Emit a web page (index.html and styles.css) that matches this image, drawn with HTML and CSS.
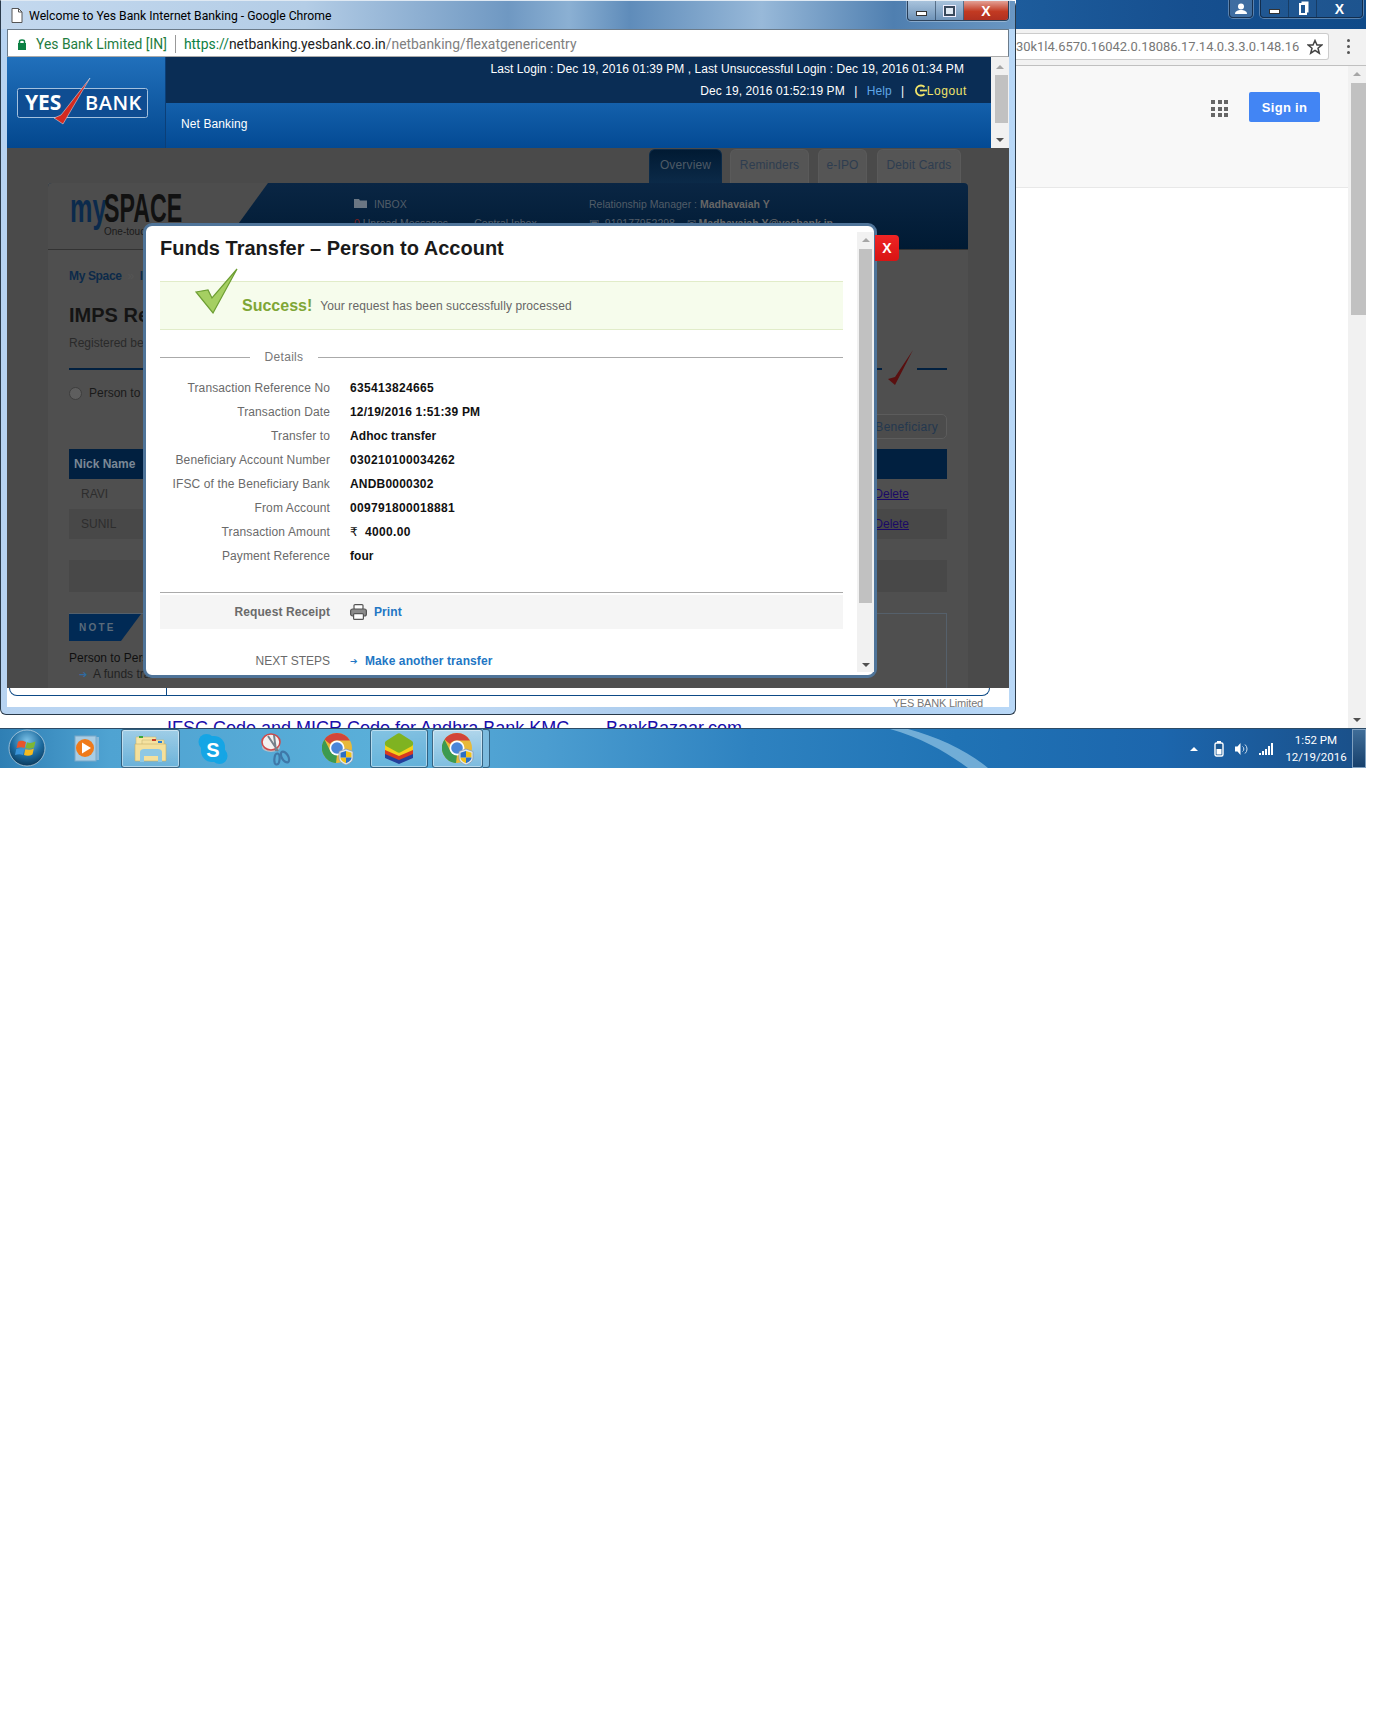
FILE: index.html
```html
<!DOCTYPE html>
<html lang="en">
<head>
<meta charset="utf-8">
<title>Funds Transfer</title>
<link rel="stylesheet" href="styles.css">
</head>
<body>
<svg class="defs" width="0" height="0" aria-hidden="true">
  <defs>
    <symbol id="chrome" viewBox="0 0 32 32">
      <circle cx="15" cy="15" r="15" fill="#e8b93a"/>
      <path d="M15 0A15 15 0 0 1 28 7.500L15 7.500A7.500 7.500 0 0 0 8 11L2.500 6.500A15 15 0 0 1 15 0Z" fill="#d2453a"/>
      <path d="M2.500 6.500L8.500 18.500L14 29.900A15 15 0 0 1 2.500 6.500Z" fill="#3c9a50"/>
      <path d="M8 17L15 22L14 30A15 15 0 0 1 9 28Z" fill="#3c9a50"/>
      <circle cx="15" cy="15" r="7.500" fill="#fff"/>
      <circle cx="15" cy="15" r="5.800" fill="#4a86d8"/>
      <path d="M24 16L31 18.500V25C31 28.500 27.500 30.500 24 32C20.500 30.500 17 28.500 17 25V18.500Z" fill="#dfe8ee" stroke="#8c9cae" stroke-width=".8"/>
      <path d="M24 18L29.500 19.700V24.500H24ZM24 24.500V30.300C21.500 29 18.500 27.500 18.500 24.500Z" fill="#f2c21a"/>
      <path d="M24 18V24.500H18.500V19.700ZM24 24.500H29.500C29.500 27.500 26.500 29 24 30.300Z" fill="#2b6fc4"/>
    </symbol>
    <symbol id="tick" viewBox="0 0 44 46">
      <path d="M1 24L13 22L17 30L42 1L18 45Z" fill="#a5cf62" stroke="#6d9e33" stroke-width="1.200"/>
    </symbol>
  </defs>
</svg>

<main class="desktop">

  <section class="back-window">
    <div class="back-titlebar">
      <div class="caption-group profile-button">
        <svg width="14" height="12" viewBox="0 0 14 12"><circle cx="7" cy="3.500" r="3" fill="#fff"/><path d="M1 11C1 8 4 7 7 7S13 8 13 11Z" fill="#fff"/></svg>
      </div>
      <div class="caption-group back-caption">
        <span class="cap-cell"><i class="glyph-min"></i></span>
        <span class="cap-cell"><i class="glyph-restore"></i></span>
        <span class="cap-cell cap-wide">X</span>
      </div>
    </div>
    <div class="back-toolbar">
      <div class="omnibox">
        <span class="omni-text">30k1l4.6570.16042.0.18086.17.14.0.3.3.0.148.16</span>
        <svg class="omni-star" width="16" height="16" viewBox="0 0 16 16"><path d="M8 1.500L10 6H14.800L11 9.200L12.300 14.200L8 11.400L3.700 14.200L5 9.200L1.200 6H6Z" fill="none" stroke="#444" stroke-width="1.500"/></svg>
      </div>
      <span class="omni-menu"><i></i><i></i><i></i></span>
    </div>
    <div class="back-page">
      <div class="back-content">
        <header class="google-bar">
          <div class="apps-grid"><i></i><i></i><i></i><i></i><i></i><i></i><i></i><i></i><i></i></div>
          <button class="sign-in">Sign in</button>
        </header>
      </div>
      <div class="back-scroll">
        <span class="arrow-up gray"></span>
        <span class="back-thumb"></span>
        <span class="arrow-down gray back-arrow-down"></span>
      </div>
    </div>
  </section>

  <a class="behind-link">IFSC Code and MICR Code for Andhra Bank KMC ...</a>
  <a class="behind-link behind-link-2">BankBazaar.com</a>

  <section class="window">
    <div class="titlebar">
      <svg class="doc-icon" width="12" height="15" viewBox="0 0 12 15"><path d="M1 .500H7.500L11 4V14.500H1Z" fill="#fff" stroke="#555"/><path d="M7.500 .500V4H11" fill="none" stroke="#555"/></svg>
      <span class="window-title">Welcome to Yes Bank Internet Banking - Google Chrome</span>
      <div class="caption-group front-caption">
        <span class="cap-cell"><i class="glyph-min"></i></span>
        <span class="cap-cell"><i class="glyph-max"></i></span>
        <span class="cap-cell cap-close">X</span>
      </div>
    </div>

    <div class="addressbar">
      <svg class="lock" width="10" height="12" viewBox="0 0 10 12"><path d="M2.500 5V3.500C2.500 1.500 7.500 1.500 7.500 3.500V5" fill="none" stroke="#0b8043" stroke-width="1.500"/><rect x="1" y="5" width="8" height="7" fill="#0b8043"/></svg>
      <span class="ev-name">Yes Bank Limited [IN]</span>
      <span class="addr-sep"></span>
      <span class="url"><span class="url-scheme">https://</span><span class="url-host">netbanking.yesbank.co.in</span><span class="url-path">/netbanking/flexatgenericentry</span></span>
    </div>

    <header class="bank-header">
      <div class="logo-cell">
        <svg class="bank-logo" width="140" height="52" viewBox="0 0 140 52">
          <rect x="1.500" y="10.500" width="130" height="29" rx="2" fill="#0f4d92" stroke="#a4c1de"/>
          <text x="9" y="32" class="logo-yes">YES</text>
          <text x="69" y="32" class="logo-bank">BANK</text>
          <path d="M38 40L47 46L74 0L45 37Z" fill="#d42a20" stroke="#e8eef5" stroke-width=".5"/>
        </svg>
      </div>
      <div class="header-main">
        <div class="header-top">
          <p class="login-line">Last Login : Dec 19, 2016 01:39 PM , Last Unsuccessful Login : Dec 19, 2016 01:34 PM</p>
          <p class="session-line">Dec 19, 2016 01:52:19 PM <span class="pipe">|</span> <a class="help-link">Help</a> <span class="pipe">|</span>
            <a class="logout-link"><svg width="13" height="13" viewBox="0 0 13 13"><path d="M10.500 3A5 5 0 1 0 10.500 10" fill="none" stroke="#f1e36a" stroke-width="1.800"/><path d="M6 6.500H13" stroke="#f1e36a" stroke-width="1.800"/></svg>Logout</a></p>
        </div>
        <div class="header-nav">Net Banking</div>
      </div>
      <div class="header-scroll">
        <span class="arrow-up gray"></span>
        <span class="header-thumb"></span>
        <span class="arrow-down dark"></span>
      </div>
    </header>

    <div class="dim-area">
      <nav class="tabs">
        <a class="tab tab-active">Overview</a>
        <a class="tab tab-reminders">Reminders</a>
        <a class="tab tab-ipo">e-IPO</a>
        <a class="tab tab-debit">Debit Cards</a>
      </nav>
      <div class="panel">
        <div class="space-head">
          <div class="space-brand">
            <span class="brand-my">my</span>
            <span class="brand-space">SPACE</span>
            <span class="brand-tag">One-touch</span>
          </div>
          <div class="space-info">
            <div class="inbox-col">
              <p><svg width="13" height="10" viewBox="0 0 13 10"><path d="M0 1H5L6 2.500H13V10H0Z" fill="#6b7683"/></svg><span class="inbox-label">INBOX</span></p>
              <p class="clip-line"><span class="red-zero">0</span> Unread Messages &nbsp; &nbsp; &nbsp; &nbsp; Central Inbox</p>
            </div>
            <div class="rm-col">
              <p>Relationship Manager : <b>Madhavaiah Y</b></p>
              <p class="clip-line">▣ &nbsp;919177952298 &nbsp; &nbsp;✉ <b>Madhavaiah.Y@yesbank.in</b></p>
            </div>
          </div>
        </div>
        <div class="panel-body">
          <p class="crumbs"><b>My Space</b> <span class="crumb-sep">»</span> <b>IMPS</b></p>
          <h2 class="page-title">IMPS Registration</h2>
          <p class="page-sub">Registered beneficiaries</p>
          <div class="steps">
            <span class="step-line step-left"></span>
            <span class="step-line step-mid"></span>
            <svg class="red-tick" width="26" height="36" viewBox="0 0 26 36"><path d="M0 29L7 35L25 0L7 27Z" fill="#5a1010"/></svg>
            <span class="step-line step-right"></span>
          </div>
          <label class="radio-row"><i class="radio"></i>Person to Person</label>
          <div class="add-row"><a class="add-btn">Add Beneficiary</a></div>
          <div class="thead"><span>Nick Name</span></div>
          <div class="trow"><span>RAVI</span><a>Delete</a></div>
          <div class="trow trow-alt"><span>SUNIL</span><a>Delete</a></div>
          <div class="tfoot-strip"></div>
          <div class="note-box">
            <div class="note-tag">NOTE</div>
            <p class="note-text">Person to Person</p>
            <p class="note-item"><span class="note-arrow">➔</span> A funds transfer</p>
          </div>
        </div>
      </div>
    </div>

    <footer class="window-foot">
      <div class="foot-rule"><span class="foot-tick"></span></div>
      <span class="foot-text">YES BANK Limited</span>
    </footer>

    <section class="modal">
      <div class="modal-body">
        <h1 class="modal-title">Funds Transfer – Person to Account</h1>
        <div class="success-band">
          <svg class="success-tick" width="44" height="46"><use href="#tick"/></svg>
          <strong>Success!</strong>
          <span>Your request has been successfully processed</span>
        </div>
        <div class="legend"><span class="legend-line legend-short"></span><span class="legend-text">Details</span><span class="legend-line legend-long"></span></div>
        <dl class="detail-list">
          <dt>Transaction Reference No</dt><dd class="val-num">635413824665</dd>
          <dt>Transaction Date</dt><dd class="val-date">12/19/2016 1:51:39 PM</dd>
          <dt>Transfer to</dt><dd>Adhoc transfer</dd>
          <dt>Beneficiary Account Number</dt><dd class="val-num">030210100034262</dd>
          <dt>IFSC of the Beneficiary Bank</dt><dd class="val-date">ANDB0000302</dd>
          <dt>From Account</dt><dd class="val-num">009791800018881</dd>
          <dt>Transaction Amount</dt><dd class="val-num"><span class="rupee">₹</span>4000.00</dd>
          <dt>Payment Reference</dt><dd>four</dd>
        </dl>
        <div class="receipt-band">
          <span class="receipt-label">Request Receipt</span>
          <svg class="printer" width="17" height="16" viewBox="0 0 17 16"><rect x="4" y=".600" width="9" height="5" rx="1" fill="#fff" stroke="#555" stroke-width="1.200"/><rect x=".600" y="5" width="15.800" height="7" rx="2" fill="#8b8b8b" stroke="#555" stroke-width="1.200"/><rect x="3.600" y="9.600" width="9.800" height="5.800" rx="1" fill="#fff" stroke="#555" stroke-width="1.200"/></svg>
          <a class="modal-link">Print</a>
        </div>
        <div class="next-row">
          <span class="next-label">NEXT STEPS</span>
          <span class="next-arrow">➔</span>
          <a class="modal-link">Make another transfer</a>
        </div>
      </div>
      <div class="modal-scroll">
        <span class="arrow-up gray"></span>
        <span class="modal-thumb"></span>
        <span class="arrow-down dark modal-arrow-down"></span>
      </div>
      <button class="modal-close">X</button>
    </section>
  </section>

  <footer class="taskbar">
    <svg class="swoosh" width="140" height="39" viewBox="0 0 140 39"><path d="M0 0H18C48 8 78 22 98 39H78C58 24 32 9 0 0Z" fill="#8cc0e2" fill-opacity=".75"/></svg>
    <svg class="start-orb" width="38" height="38" viewBox="0 0 38 38">
      <defs><radialGradient id="orb" cx="50%" cy="30%" r="70%"><stop offset="0" stop-color="#7cc2e8"/><stop offset=".6" stop-color="#1c6a9e"/><stop offset="1" stop-color="#0b3a5c"/></radialGradient></defs>
      <circle cx="19" cy="19" r="18" fill="url(#orb)" stroke="#c8dce8" stroke-opacity=".7"/>
      <path d="M10 13C13 11 15 12 18 13L16.500 19C14 18 12 18 8.500 19Z" fill="#e9552c"/>
      <path d="M19 13.300C22 14.500 24 14 27.500 12.500L26 18.500C23 20 20.500 20 17.500 19Z" fill="#7db735"/>
      <path d="M8.300 20C12 19 14 19 16.300 20L15 26C12.500 25 10 25 7 26Z" fill="#3a93d8"/>
      <path d="M17.300 20.300C20.500 21 23 21 25.800 19.600L24.500 25.500C21.500 27 19 27 16 26Z" fill="#f6bb1f"/>
    </svg>

    <span class="task-slot slot-wmp">
      <svg width="28" height="28" viewBox="0 0 28 28"><rect x="5" y="2" width="20" height="23" fill="#88b8d8"/><rect x="1" y="1" width="21" height="25" fill="#a8cde4" stroke="#7ba8c8"/><circle cx="11" cy="13" r="9" fill="#ef7a1a"/><path d="M8 7.500L17 13L8 18.500Z" fill="#fff"/></svg>
    </span>

    <span class="task-slot task-button slot-explorer">
      <svg width="34" height="32" viewBox="0 0 34 32"><path d="M2 4H22V12H2Z" fill="#f7e6a6" stroke="#cbb877" stroke-width=".6"/><rect x="5" y="3" width="4" height="2" fill="#3aa83a"/><path d="M8 7H30V14H8Z" fill="#f5e2a0" stroke="#cbb877" stroke-width=".6"/><rect x="18" y="6" width="4" height="2" fill="#c8402a"/><rect x="24" y="8" width="4" height="2" fill="#2a7fd0"/><path d="M1 11H32V28H1Z" fill="#f4e09c" stroke="#c7ae67" stroke-width=".6"/><path d="M6 29V19C6 17 8 16 10 16H24C26 16 28 17 28 19V29H24V23H10V29Z" fill="#8ec8e4"/></svg>
    </span>

    <span class="task-slot slot-skype">
      <svg width="30" height="32" viewBox="0 0 30 32"><circle cx="8.500" cy="9" r="8" fill="#15a5e5"/><circle cx="21.500" cy="23" r="8" fill="#15a5e5"/><rect x="3" y="3" width="24" height="26" rx="11" fill="#15a5e5"/><text x="15" y="24" class="skype-s">S</text></svg>
    </span>

    <span class="task-slot slot-snip">
      <svg width="30" height="34" viewBox="0 0 30 34"><ellipse cx="10" cy="15" rx="9" ry="5" fill="#b9c0c8"/><ellipse cx="10" cy="10" rx="9" ry="8" fill="#f4f1f0" stroke="#cf4a4a" stroke-width="1.600"/><path d="M7 4L17 19M13 3L15 19" stroke="#77808a" stroke-width="2"/><ellipse cx="24" cy="25" rx="3.200" ry="6" transform="rotate(-30 24 25)" fill="none" stroke="#3f78a8" stroke-width="2.200"/><ellipse cx="16" cy="27" rx="2.600" ry="5.500" transform="rotate(5 16 27)" fill="none" stroke="#3f78a8" stroke-width="2.200"/></svg>
    </span>

    <span class="task-slot slot-chrome"><svg width="32" height="32"><use href="#chrome"/></svg></span>

    <span class="task-slot task-button slot-blue">
      <svg width="30" height="32" viewBox="0 0 30 32"><path d="M1 19C1 15 25 15 29 19V25L15 31L1 25Z" fill="#243f9c"/><path d="M1 15C1 12 25 12 29 15V21L15 27L1 21Z" fill="#d83a20"/><path d="M1 12C1 9 25 9 29 12V17L15 23L1 17Z" fill="#f4d21a"/><path d="M13 1C14 0 16 0 17 1L28 8C29.500 9 29.500 12 28 13L17 19C16 20 14 20 13 19L2 13C.500 12 .500 9 2 8Z" fill="#7fb321"/></svg>
    </span>

    <span class="task-slot task-button task-active slot-chrome-active"><svg width="32" height="32"><use href="#chrome"/></svg></span>
    <span class="task-sliver"></span>

    <div class="tray">
      <span class="tray-arrow"></span>
      <svg width="10" height="16" viewBox="0 0 10 16"><rect x="1" y="2" width="8" height="13" rx="1.500" fill="#1d5a94" stroke="#fff" stroke-width="1.400"/><rect x="3" y="0" width="4" height="2" fill="#fff"/><rect x="2.500" y="8" width="5" height="5.500" fill="#fff"/></svg>
      <svg width="15" height="14" viewBox="0 0 15 14"><path d="M1 4.500H3.500L6.500 1V13L3.500 9.500H1Z" fill="#fff"/><path d="M8.500 4.500A3 3 0 0 1 8.500 9.500M11 2.500A6 6 0 0 1 11 11.500" fill="none" stroke="#cfe0ee" stroke-width="1"/></svg>
      <svg width="15" height="12" viewBox="0 0 15 12"><rect x="0" y="10" width="2" height="2" fill="#fff"/><rect x="3" y="8" width="2" height="4" fill="#fff"/><rect x="6" y="6" width="2" height="6" fill="#fff"/><rect x="9" y="3" width="2" height="9" fill="#fff"/><rect x="12" y="0" width="2" height="12" fill="#fff"/></svg>
    </div>
    <div class="clock"><span>1:52 PM</span><span>12/19/2016</span></div>
    <span class="show-desktop"></span>
  </footer>
</main>
</body>
</html>
```
FILE: styles.css
```css
* { box-sizing: border-box; }
html, body { margin: 0; padding: 0; background: #fff; }
body { width: 1373px; height: 1713px; font-family: "Liberation Sans", Arial, sans-serif; font-size: 12px; color: #222; overflow: hidden; }
p, h1, h2, dl, dd, dt { margin: 0; padding: 0; font-weight: normal; }
a { cursor: pointer; }
i { font-style: normal; }
.defs { position: absolute; }

.desktop { position: relative; width: 1366px; height: 768px; overflow: hidden; }

/* scrollbar arrows */
.arrow-up, .arrow-down { display: block; width: 0; height: 0; border-left: 4px solid transparent; border-right: 4px solid transparent; flex: none; }
.arrow-up.gray { border-bottom: 4px solid #a6a6a6; }
.arrow-down.dark { border-top: 4px solid #505050; }
.arrow-down.gray { border-top: 4px solid #505050; }

/* caption buttons */
.caption-group { display: flex; border: 1px solid rgba(15, 35, 60, .8); border-top: 0; border-radius: 0 0 4px 4px; box-shadow: 0 0 0 1px rgba(255, 255, 255, .3); overflow: hidden; }
.cap-cell { display: flex; align-items: center; justify-content: center; width: 28px; color: #fff; font: bold 14px "Liberation Sans", sans-serif; border-right: 1px solid rgba(15, 35, 60, .5); }
.cap-cell:last-child { border-right: 0; }
.glyph-min { display: block; width: 11px; height: 5px; margin-top: 6px; background: #fff; border: 1px solid #333; }
.glyph-max { display: block; width: 11px; height: 10px; background: #dfe8f2; border: 2px solid #39495c; outline: 1px solid #eef; }
.glyph-restore { display: block; width: 8px; height: 12px; border: 2px solid #fff; box-shadow: 2px -2px 0 -0.5px #fff; }

/* back chrome window */
.back-window { position: absolute; left: 1016px; top: 0; width: 350px; height: 728px; display: flex; flex-direction: column; background: #fff; }
.back-titlebar { height: 29px; flex: none; background: linear-gradient(90deg, #1d5c9c, #164f8f 50%, #0f4a88); display: flex; justify-content: flex-end; align-items: flex-start; padding-right: 3px; gap: 7px; }
.profile-button { width: 24px; height: 18px; align-items: center; justify-content: center; background: rgba(255, 255, 255, .18); }
.back-caption { height: 18px; width: 103px; background: rgba(255, 255, 255, .06); }
.back-caption .cap-wide { flex: 1; width: auto; }
.back-toolbar { height: 37px; flex: none; background: #f2f2f2; border-bottom: 1px solid #c0c0c0; display: flex; align-items: flex-start; padding-top: 4px; }
.omnibox { width: 313px; height: 27px; background: #fff; border: 1px solid #ccc; border-left: 0; border-radius: 0 3px 3px 0; display: flex; align-items: center; overflow: hidden; }
.omni-text { font: 12.950px "Roboto", sans-serif; color: #777; white-space: nowrap; width: 288px; overflow: hidden; flex: none; }
.omni-star { margin-left: 3px; flex: none; }
.omni-menu { display: flex; flex-direction: column; gap: 3px; margin: 6px 0 0 18px; }
.omni-menu i { display: block; width: 3px; height: 3px; background: #555; border-radius: 50%; }
.back-page { flex: 1; display: flex; min-height: 0; }
.back-content { flex: 1; }
.google-bar { height: 122px; background: #f8f8f8; border-bottom: 1px solid #e8e8e8; display: flex; justify-content: flex-end; align-items: flex-start; padding: 26px 28px 0 0; }
.apps-grid { display: grid; grid-template-columns: repeat(3, 4px); grid-auto-rows: 4px; gap: 2.500px; margin: 8px 21px 0 0; }
.apps-grid i { display: block; background: #666; }
.sign-in { width: 71px; height: 30px; border: 0; border-radius: 2px; background: #4285f4; color: #fff; font: bold 13px "Liberation Sans", sans-serif; letter-spacing: .3px; padding: 0; }
.back-scroll { width: 18px; flex: none; background: #f1f1f1; display: flex; flex-direction: column; align-items: center; padding-top: 6px; }
.back-thumb { display: block; width: 15px; height: 232px; margin: 7px 0 0 3px; background: #c1c1c1; flex: none; }
.back-arrow-down { margin-top: auto; margin-bottom: 6px; }

.behind-link { position: absolute; left: 167px; top: 717px; font-size: 18px; line-height: 22px; color: #1a0dab; text-decoration: underline; white-space: nowrap; }
.behind-link-2 { left: 606px; }

/* main window */
.window { position: absolute; left: 0; top: 0; width: 1016px; height: 715px; display: flex; flex-direction: column; padding: 0 6px 7px 6px; border-radius: 0 6px 6px 6px; background: linear-gradient(90deg, #b7d3f1, #c4dcf5 40%, #a7c9ec 70%, #b9d8f7); border: 1px solid #2a3a4a; border-top: 1px solid #dfe9f3; }
.titlebar { height: 28px; flex: none; display: flex; align-items: center; margin: 0 -6px 0 -6px; padding: 1px 0 0 10px; position: relative; background: linear-gradient(90deg, #c3d8ee 0%, #b4cde6 30%, #6f98c2 50%, #8bb0d3 56%, #5f8cba 62%, #98b9d9 75%, #4f7fb0 88%, #6a97c3 100%); }
.doc-icon { margin-right: 6px; }
.window-title { font: 12.200px "Roboto", sans-serif; color: #000; white-space: nowrap; }
.front-caption { position: absolute; right: 6px; top: 0; height: 20px; width: 102px; background: linear-gradient(#a8c3dc, #6f93b8); }
.front-caption .cap-close { flex: 1; width: auto; background: linear-gradient(#e3a094, #c23a22 55%, #b03020); font-size: 14px; }
.addressbar { height: 28px; flex: none; background: #fff; border: 1px solid #6b7b8a; border-bottom-color: #aaa; display: flex; align-items: center; padding: 1px 0 0 9px; font: 13.900px "Roboto", sans-serif; white-space: nowrap; }
.lock { margin-right: 9px; flex: none; }
.ev-name { color: #1f7d3f; }
.addr-sep { width: 1px; height: 18px; background: #999; margin: 0 8px 0 8px; flex: none; }
.url-scheme { color: #0b8043; }
.url-host { color: #222; }
.url-path { color: #808080; }

.bank-header { height: 91px; flex: none; display: flex; }
.logo-cell { width: 159px; flex: none; background: linear-gradient(#2170bb, #03478e); border-right: 1px solid #0b3f78; padding: 21px 0 0 9px; }
.bank-logo { display: block; }
.logo-yes { font: bold 21px "Open Sans", "Liberation Sans", sans-serif; fill: #fff; }
.logo-bank { font: 600 20px "Open Sans", "Liberation Sans", sans-serif; fill: #fff; letter-spacing: .5px; }
.header-main { flex: 1; display: flex; flex-direction: column; color: #fff; min-width: 0; }
.header-top { height: 46px; background: #0a2d55; text-align: right; padding: 1px 24px 0 0; line-height: 22px; letter-spacing: .07px; }
.login-line { padding-right: 3px; }
.pipe { margin: 0 6px; }
.help-link { color: #5fa6e6; }
.logout-link { color: #f1e36a; letter-spacing: .6px; }
.logout-link svg { vertical-align: -2px; }
.header-nav { flex: 1; background: linear-gradient(#1460ab, #034a94); padding: 14px 0 0 15px; line-height: 14px; letter-spacing: .1px; }
.header-scroll { width: 18px; flex: none; background: #f1f1f1; display: flex; flex-direction: column; align-items: center; padding: 8px 0 6px; }
.header-thumb { display: block; width: 13px; height: 48px; margin-top: 6px; background: #c1c1c1; flex: none; margin-left: 3px; }
.header-scroll .arrow-down { margin-top: auto; }

/* dimmed page */
.dim-area { height: 540px; flex: none; background: #4a4a4a; overflow: hidden; }
.tabs { height: 35px; display: flex; padding: 1px 0 0 642px; }
.tab { height: 34px; display: flex; align-items: center; justify-content: center; padding-bottom: 3px; border-radius: 6px 6px 0 0; border: 1px solid #5a5a5a; border-bottom: 0; background: #555; color: #2e3d50; font-size: 12px; letter-spacing: .15px; }
.tab-active { width: 73px; background: linear-gradient(#011a33, #0b2a48); color: #4d5a66; border-color: #0b2a48; }
.tab-reminders { width: 79px; margin-left: 8px; }
.tab-ipo { width: 49px; margin-left: 9px; }
.tab-debit { width: 84px; margin-left: 10px; }
.panel { width: 920px; height: 505px; margin-left: 41px; background: #4f4f4f; }
.space-head { height: 67px; display: flex; border-radius: 4px 4px 0 0; overflow: hidden; background: linear-gradient(#0a2644, #001a33); border-bottom: 1px solid #333; }
.space-brand { width: 220px; flex: none; position: relative; background: #4d4d4d; clip-path: polygon(0 0, 100% 0, 172px 100%, 0 100%); }
.brand-my, .brand-space { position: absolute; top: 5px; font: bold 40px/40px "Liberation Sans", sans-serif; transform-origin: left center; white-space: nowrap; }
.brand-my { left: 22px; color: #0b2a4c; transform: scaleX(.63); }
.brand-space { left: 56px; color: #111; transform: scaleX(.58); }
.brand-tag { position: absolute; left: 56px; top: 43px; font-size: 10px; line-height: 12px; color: #1a1a1a; }
.space-info { flex: 1; display: flex; padding: 14px 0 0 86px; font-size: 10.500px; line-height: 14px; color: #525d68; }
.inbox-col { width: 235px; flex: none; }
.inbox-label { margin-left: 7px; }
.clip-line { margin-top: 5px; }
.red-zero { color: #7a2020; }
.rm-col b { color: #666; }
.panel-body { position: relative; padding: 0 21px; }
.crumbs { padding-top: 19px; line-height: 14px; color: #0c2a4a; font-size: 12px; letter-spacing: -.35px; }
.crumb-sep { color: #555; margin: 0 3px; }
.page-title { font: bold 20px/26px "Liberation Sans", sans-serif; color: #141414; margin-top: 19px; white-space: nowrap; }
.page-sub { line-height: 14px; margin-top: 8px; color: #2a2a2a; }
.steps { position: absolute; left: 21px; right: 21px; top: 100px; height: 36px; }
.step-line { position: absolute; height: 2px; top: 18px; background: #012040; }
.step-left { left: 0; width: 90px; }
.step-mid { left: 800px; width: 13px; }
.step-right { left: 848px; width: 30px; }
.red-tick { position: absolute; left: 819px; top: 0; }
.radio-row { display: flex; align-items: center; gap: 7px; height: 16px; margin-top: 35px; color: #1a1a1a; }
.radio { display: block; width: 13px; height: 13px; border-radius: 50%; background: #5e5e5e; border: 1px solid #3e3e3e; }
.add-row { display: flex; justify-content: flex-end; margin-top: 13px; }
.add-btn { width: 100px; height: 25px; border: 1px solid #5c5c5c; border-radius: 5px; background: #4c4c4c; color: #24384f; display: flex; align-items: center; justify-content: flex-end; padding-right: 8px; white-space: nowrap; letter-spacing: .3px; }
.thead { height: 30px; margin-top: 10px; background: #012040; color: #7b8896; font-weight: bold; display: flex; align-items: center; padding-left: 5px; }
.trow { height: 30px; display: flex; align-items: center; justify-content: space-between; padding: 0 38px 0 12px; color: #2d2d2d; }
.trow-alt { background: #484848; }
.trow a { color: #1a0a66; text-decoration: underline; }
.tfoot-strip { height: 32px; margin-top: 21px; background: #484848; }
.note-box { margin-top: 21px; height: 80px; border: 1px solid #55606b; border-left: 0; position: relative; }
.note-tag { width: 72px; height: 27px; background: #012a55; color: #5b6b7a; font-weight: bold; font-size: 10px; letter-spacing: 2.200px; display: flex; align-items: center; padding-left: 10px; clip-path: polygon(0 0, 100% 0, 52px 100%, 0 100%); }
.note-text { line-height: 14px; margin-top: 10px; color: #0f0f0f; }
.note-item { line-height: 14px; margin-top: 2px; padding-left: 10px; color: #222; }
.note-arrow { color: #2f6aa0; font: 10px "DejaVu Sans", sans-serif; margin-right: 3px; }

/* window footer */
.window-foot { flex: 1; background: #fff; position: relative; }
.foot-rule { width: 981px; height: 8px; margin-left: 2px; border: 1px solid #0d4a86; border-top: 0; border-radius: 0 0 8px 8px; position: relative; }
.foot-tick { position: absolute; left: 156px; top: 0; width: 1px; height: 7px; background: #0d4a86; }
.foot-text { position: absolute; right: 26px; top: 9px; font-size: 11px; line-height: 13px; color: #777; letter-spacing: -.2px; }

/* modal */
.modal { position: absolute; left: 142px; top: 222px; width: 734px; height: 455px; background: #fff; border: 3px solid #4f7499; border-radius: 9px; display: flex; }
.modal-body { flex: 1; min-width: 0; padding: 0 14px; overflow: hidden; }
.modal-title { font: bold 20px/26px "Liberation Sans", sans-serif; color: #1a1a1a; padding-top: 9px; height: 55px; white-space: nowrap; }
.success-band { position: relative; height: 49px; background: #f6fcec; border-top: 1px solid #e1ecc9; border-bottom: 1px solid #e1ecc9; display: flex; align-items: center; padding: 0 0 0 82px; color: #666; letter-spacing: .1px; }
.success-band strong { font-size: 16px; color: #7fa636; margin-right: 8px; letter-spacing: 0; }
.success-tick { position: absolute; left: 35px; top: -14px; }
.legend { display: flex; align-items: center; height: 16px; margin-top: 19px; color: #777; }
.legend-line { display: block; height: 1px; background: #aaa; }
.legend-short { width: 90px; }
.legend-text { width: 68px; text-align: center; letter-spacing: .3px; }
.legend-long { flex: 1; }
.detail-list { display: grid; grid-template-columns: 170px 1fr; column-gap: 20px; grid-auto-rows: 24px; margin-top: 11px; align-items: center; }
.detail-list dt { text-align: right; color: #6a6a6a; white-space: nowrap; letter-spacing: .12px; }
.detail-list dd { color: #111; font-weight: bold; letter-spacing: .07px; }
.detail-list .val-num { letter-spacing: .33px; }
.detail-list .val-date { letter-spacing: .2px; }
.rupee { font: 12px "DejaVu Sans", sans-serif; margin-right: 7px; }
.receipt-band { margin-top: 24px; border-top: 1px solid #aaa; background: #f5f5f5; background-clip: content-box; padding-top: 2px; height: 37px; display: flex; align-items: center; }
.receipt-label { width: 170px; text-align: right; font-weight: bold; color: #6a6a6a; margin-right: 20px; letter-spacing: .1px; }
.printer { margin-right: 7px; }
.modal-link { color: #2276c4; font-weight: bold; letter-spacing: .1px; }
.next-row { display: flex; align-items: center; height: 24px; margin-top: 20px; }
.next-label { width: 170px; text-align: right; color: #6a6a6a; margin-right: 20px; }
.next-arrow { color: #2276c4; font: 9px "DejaVu Sans", sans-serif; width: 15px; }
.modal-scroll { width: 17px; flex: none; margin: 6px 0 3px; background: #f1f1f1; display: flex; flex-direction: column; align-items: center; padding: 6px 0 5px; }
.modal-thumb { display: block; width: 13px; height: 354px; margin-top: 7px; background: #c1c1c1; flex: none; }
.modal-arrow-down { margin-top: auto; }
.modal-close { position: absolute; left: 729px; top: 9px; width: 24px; height: 26px; background: linear-gradient(#ef2424, #d81414); color: #fff; border: 0; border-radius: 0 4px 4px 0; font: bold 14px "Liberation Sans", sans-serif; padding: 0; }

/* taskbar */
.taskbar { position: absolute; left: 0; top: 728px; width: 1366px; height: 40px; border-top: 1px solid #2d4b66; background: linear-gradient(90deg, #2f7fb4 0, #4fa3d2 8%, #5aafd9 28%, #4b9dd0 40%, #2e82c0 55%, #2073b5 70%, #1c66ad 85%, #1a4f88 100%); }
.swoosh { position: absolute; left: 890px; top: 0; }
.start-orb { position: absolute; left: 8px; top: 0; }
.task-slot { position: absolute; top: 0; height: 39px; display: flex; align-items: center; justify-content: center; }
.task-button { border: 1px solid rgba(20, 60, 90, .7); border-radius: 3px; background: linear-gradient(rgba(255, 255, 255, .25), rgba(255, 255, 255, .08)); box-shadow: inset 0 0 0 1px rgba(255, 255, 255, .45); }
.task-active { background: linear-gradient(rgba(255, 255, 255, .55), rgba(255, 255, 255, .25)); }
.slot-wmp { left: 73px; width: 30px; }
.slot-explorer { left: 121px; width: 59px; background: linear-gradient(rgba(255, 255, 255, .45), rgba(255, 255, 255, .15)); }
.slot-skype { left: 198px; width: 30px; }
.slot-snip { left: 261px; width: 30px; }
.slot-chrome { left: 322px; width: 32px; }
.slot-blue { left: 370px; width: 58px; }
.slot-chrome-active { left: 432px; width: 51px; }
.task-sliver { position: absolute; left: 483px; top: 0; width: 7px; height: 39px; border: 1px solid rgba(20, 60, 90, .7); border-left: 0; border-radius: 0 3px 3px 0; background: rgba(255, 255, 255, .25); }
.tray { position: absolute; left: 1190px; top: 0; height: 39px; width: 90px; display: flex; align-items: center; gap: 10px; }
.tray-arrow { display: block; width: 0; height: 0; border-left: 4px solid transparent; border-right: 4px solid transparent; border-bottom: 4px solid #fff; margin-right: 6px; }
.clock { position: absolute; left: 1286px; top: 3px; width: 60px; display: flex; flex-direction: column; align-items: center; color: #fff; font: 11.500px/17px "Roboto", sans-serif; }
.show-desktop { position: absolute; left: 1352px; top: 0; width: 14px; height: 39px; background: linear-gradient(#3f6d98, #17406c); border: 1px solid #7fa0c0; }
.skype-s { font: bold 20px "Liberation Sans", sans-serif; fill: #fff; text-anchor: middle; }
```
